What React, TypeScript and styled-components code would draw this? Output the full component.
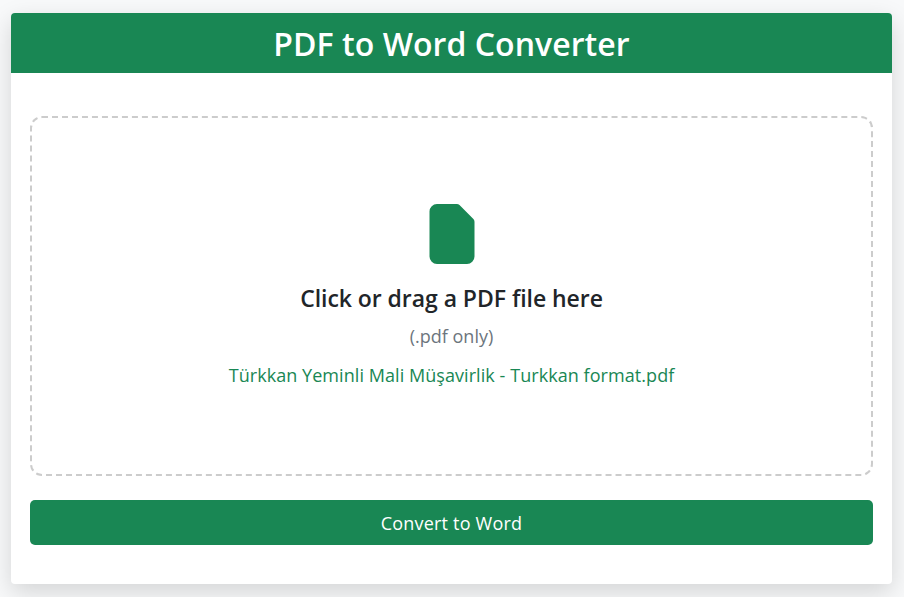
import { createGlobalStyle, styled } from "styled-components";

const GlobalStyle = createGlobalStyle`
  html, body {
    margin: 0;
    padding: 0;
    height: 100%;
    background-color: #f8f9fa;
    font-family: "Open Sans", "Noto Sans", sans-serif;
  }
`;

const Page = styled.div`
  padding: 13px 12px 13px 11px;
`;

const Card = styled.div`
  height: 571px;
  box-sizing: border-box;
  display: flex;
  flex-direction: column;
  background-color: white;
  border-radius: 4px;
  box-shadow: 0 8px 24px rgba(0, 0, 0, 0.15);
  overflow: hidden;
`;

const Header = styled.div`
  height: 60px;
  display: flex;
  align-items: center;
  justify-content: center;
  background-color: #198754;
  color: white;
`;

const Title = styled.h1`
  margin: 0;
  font-size: 32px;
  font-weight: 600;
  letter-spacing: 0.05px;
`;

const Body = styled.div`
  display: flex;
  flex-direction: column;
  gap: 24px;
  padding: 43px 19px 0;
`;

const DropZone = styled.div`
  height: 360px;
  box-sizing: border-box;
  padding-top: 7px;
  display: flex;
  flex-direction: column;
  align-items: center;
  justify-content: center;
  border: 2px dashed #ccc;
  border-radius: 12px;
`;

const FileIcon = styled.svg`
  width: 60px;
  height: 60px;
  fill: #198754;
  margin-bottom: 14px;
`;

const Prompt = styled.div`
  font-size: 23px;
  line-height: 40px;
  font-weight: 600;
  letter-spacing: -0.05px;
  color: #212529;
`;

const Hint = styled.div`
  font-size: 18px;
  line-height: 36px;
  color: #6c757d;
`;

const FileName = styled.div`
  font-size: 18px;
  line-height: 42px;
  letter-spacing: 0.06px;
  color: #198754;
`;

const ConvertButton = styled.button`
  height: 45px;
  border: 0;
  border-radius: 5px;
  background-color: #198754;
  color: white;
  font-family: inherit;
  font-size: 18px;
  letter-spacing: 0.2px;
  cursor: pointer;
`;

export default function App() {
  return (
    <Page>
      <GlobalStyle />
      <Card>
        <Header>
          <Title>PDF to Word Converter</Title>
        </Header>
        <Body>
          <DropZone>
            <FileIcon viewBox="0 0 16 16">
              <path d="M4 0h5.293A1 1 0 0 1 10 .293L13.707 4a1 1 0 0 1 .293.707V14a2 2 0 0 1-2 2H4a2 2 0 0 1-2-2V2a2 2 0 0 1 2-2z" />
            </FileIcon>
            <Prompt>Click or drag a PDF file here</Prompt>
            <Hint>(.pdf only)</Hint>
            <FileName>Türkkan Yeminli Mali Müşavirlik - Turkkan format.pdf</FileName>
          </DropZone>
          <ConvertButton>Convert to Word</ConvertButton>
        </Body>
      </Card>
    </Page>
  );
}
